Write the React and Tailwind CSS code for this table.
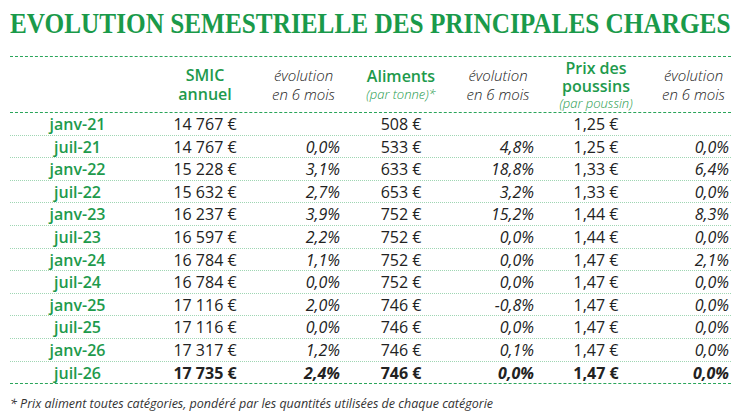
const rows = [
  ["janv-21", "14 767 €", "", "508 €", "", "1,25 €", ""],
  ["juil-21", "14 767 €", "0,0%", "533 €", "4,8%", "1,25 €", "0,0%"],
  ["janv-22", "15 228 €", "3,1%", "633 €", "18,8%", "1,33 €", "6,4%"],
  ["juil-22", "15 632 €", "2,7%", "653 €", "3,2%", "1,33 €", "0,0%"],
  ["janv-23", "16 237 €", "3,9%", "752 €", "15,2%", "1,44 €", "8,3%"],
  ["juil-23", "16 597 €", "2,2%", "752 €", "0,0%", "1,44 €", "0,0%"],
  ["janv-24", "16 784 €", "1,1%", "752 €", "0,0%", "1,47 €", "2,1%"],
  ["juil-24", "16 784 €", "0,0%", "752 €", "0,0%", "1,47 €", "0,0%"],
  ["janv-25", "17 116 €", "2,0%", "746 €", "-0,8%", "1,47 €", "0,0%"],
  ["juil-25", "17 116 €", "0,0%", "746 €", "0,0%", "1,47 €", "0,0%"],
  ["janv-26", "17 317 €", "1,2%", "746 €", "0,1%", "1,47 €", "0,0%"],
  ["juil-26", "17 735 €", "2,4%", "746 €", "0,0%", "1,47 €", "0,0%"],
];

const cols = "grid grid-cols-[135px_120px_77px_118px_76px_120px_75px]";

function Evo() {
  return (
    <div className="flex flex-col items-center justify-center italic font-light leading-[19px] text-[15px] text-[#222]">
      <span>évolution</span>
      <span>en 6 mois</span>
    </div>
  );
}

export default function App() {
  return (
    <div
      className="h-[417px] w-[747px] bg-white overflow-hidden"
      style={{ fontFamily: '"Open Sans", sans-serif' }}
    >
      <div className="h-[50px] pl-[10px] pt-[5px]">
        <h1
          className="origin-left scale-x-[0.842] whitespace-nowrap text-[30px] font-bold leading-[36px] text-[#1a9a4a]"
          style={{ fontFamily: '"Liberation Serif", serif' }}
        >
          EVOLUTION SEMESTRIELLE DES PRINCIPALES CHARGES
        </h1>
      </div>

      <div className="ml-[10px] mt-[6px] w-[721px]">
        <div className={`${cols} h-[57px] border-y border-dashed border-[#2aa55a] text-center`}>
          <div />
          <div className="flex flex-col items-center justify-center text-[16px] font-semibold leading-[19px] text-[#1e9a4c]">
            <span>SMIC</span>
            <span>annuel</span>
          </div>
          <Evo />
          <div className="flex flex-col items-center justify-center">
            <span className="text-[16px] font-semibold leading-[19px] text-[#1e9a4c]">Aliments</span>
            <span className="text-[13px] italic font-light leading-[17px] text-[#1e9a4c]">(par tonne)*</span>
          </div>
          <Evo />
          <div className="flex flex-col items-center justify-center">
            <span className="text-[16px] font-semibold leading-[18px] text-[#1e9a4c]">Prix des</span>
            <span className="text-[16px] font-semibold leading-[18px] text-[#1e9a4c]">poussins</span>
            <span className="text-[13px] italic font-light leading-[16px] text-[#1e9a4c]">(par poussin)</span>
          </div>
          <Evo />
        </div>

        {rows.map((r, i) => {
          const last = i === rows.length - 1;
          return (
            <div
              key={r[0]}
              className={`${cols} h-[22.6px] items-center text-[16px] leading-[22px] text-[#222] ${
                last ? "border-b border-dashed border-[#2aa55a] font-bold" : "border-b border-dotted border-[#9fd6b3]"
              }`}
            >
              <div className="text-center font-semibold text-[#1e9a4c]">{r[0]}</div>
              <div className="text-center">{r[1]}</div>
              <div className="text-right italic pr-[2px]">{r[2]}</div>
              <div className="text-center">{r[3]}</div>
              <div className="text-right italic pr-[2px]">{r[4]}</div>
              <div className="text-center">{r[5]}</div>
              <div className="text-right italic pr-[2px]">{r[6]}</div>
            </div>
          );
        })}
      </div>

      <p className="pl-[10px] pt-[11px] text-[12.5px] leading-[18px] italic text-[#333]">
        * Prix aliment toutes catégories, pondéré par les quantités utilisées de chaque catégorie
      </p>
    </div>
  );
}
